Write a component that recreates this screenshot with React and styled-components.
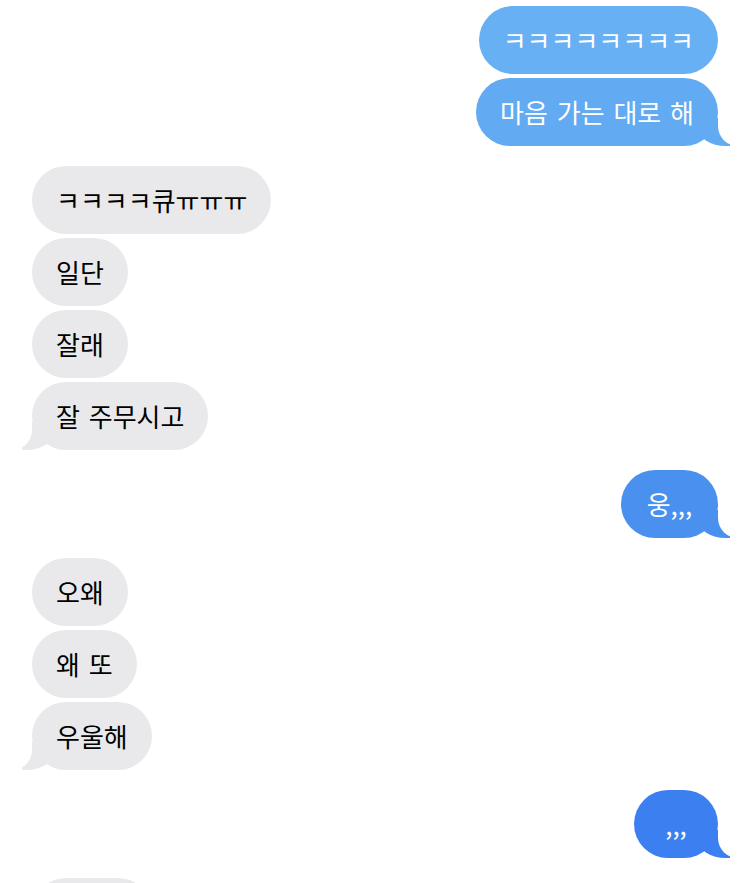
import React from "react";
import styled, { createGlobalStyle, css } from "styled-components";

const Global = createGlobalStyle`
  html, body { margin: 0; padding: 0; background: #ffffff; }
  body { font-family: "Noto Sans CJK KR", "Noto Sans", sans-serif; }
`;

const Thread = styled.div`
  display: flex;
  flex-direction: column;
  padding: 6px 32px 0 32px;
  width: 750px;
  box-sizing: border-box;
`;

const Group = styled.div`
  display: flex;
  flex-direction: column;
  align-items: ${(p) => (p.$me ? "flex-end" : "flex-start")};
  gap: 4px;
  & + & { margin-top: 20px; }
`;

const tailCss = css`
  &::before {
    content: "";
    position: absolute;
    bottom: 0;
    width: 32px;
    height: 28px;
    background: ${(p) => p.$bg};
    ${(p) =>
      p.$me
        ? css`right: -12px; border-bottom-left-radius: 28px 18px;`
        : css`left: -10px; border-bottom-right-radius: 28px 18px;`}
  }
  &::after {
    content: "";
    position: absolute;
    bottom: 0;
    width: 50px;
    height: 30px;
    background: #ffffff;
    ${(p) =>
      p.$me
        ? css`right: -50px; border-bottom-left-radius: 20px;`
        : css`left: -50px; border-bottom-right-radius: 20px;`}
  }
`;

const Bubble = styled.div`
  position: relative;
  box-sizing: border-box;
  height: 68px;
  min-width: ${(p) => (p.$w ? `${p.$w}px` : "0")};
  display: flex;
  align-items: center;
  justify-content: center;
  padding: 0 24px;
  border-radius: 34px;
  background: ${(p) => p.$bg};
  color: ${(p) => (p.$me ? "#ffffff" : "#000000")};
  font-size: 26px;
  word-spacing: 3px;
  line-height: 1;
  white-space: nowrap;
  ${(p) => p.$tail && tailCss}
`;

const Text = styled.span`
  position: relative;
  z-index: 1;
`;

const GREY = "#e9e9eb";

const groups = [
  { me: true, items: [["ㅋㅋㅋㅋㅋㅋㅋㅋ", "#67b0f3"], ["마음 가는 대로 해", "#62aaf2"]] },
  { me: false, items: [["ㅋㅋㅋㅋ큐ㅠㅠㅠ"], ["일단"], ["잘래"], ["잘 주무시고"]] },
  { me: true, items: [["웅,,,", "#4a90ef", 97]] },
  { me: false, items: [["오왜"], ["왜 또"], ["우울해"]] },
  { me: true, items: [[",,,", "#3b7ff1", 84]] },
  { me: false, items: [["", null, 120]], noTail: true },
];

export default function App() {
  return (
    <>
      <Global />
      <Thread>
        {groups.map((g, gi) => (
          <Group key={gi} $me={g.me}>
            {g.items.map(([t, c, w], i) => (
              <Bubble
                key={i}
                $me={g.me}
                $w={w}
                $bg={g.me ? c : GREY}
                $tail={!g.noTail && i === g.items.length - 1}
              >
                {t && <Text>{t}</Text>}
              </Bubble>
            ))}
          </Group>
        ))}
      </Thread>
    </>
  );
}
